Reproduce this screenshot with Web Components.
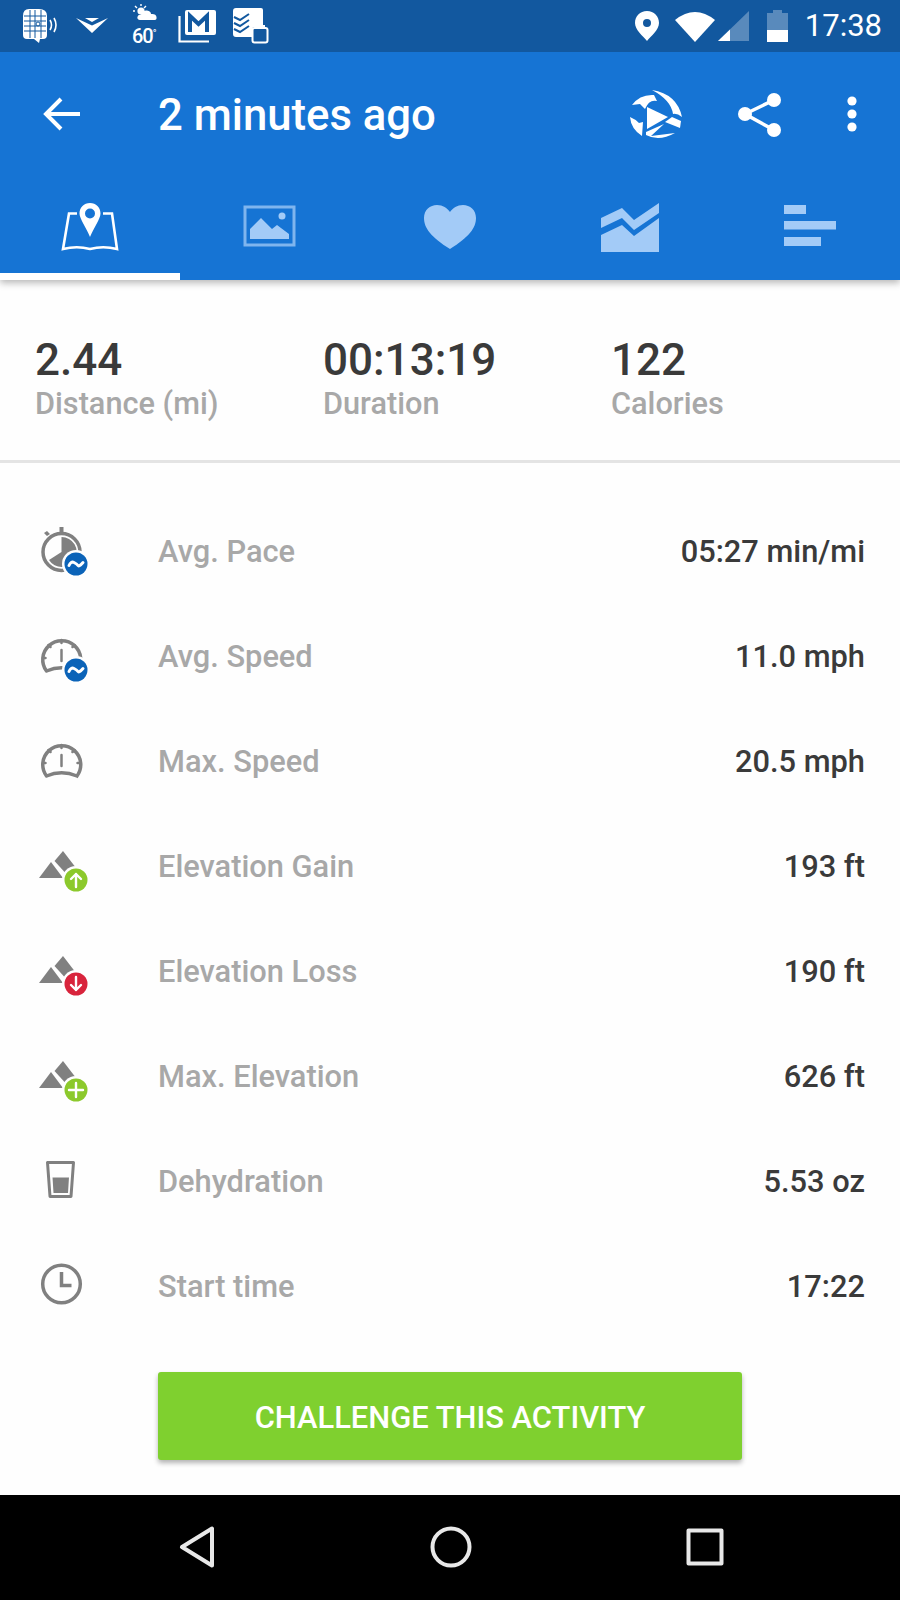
<!DOCTYPE html>
<html lang="en">
<head>
<meta charset="utf-8">
<title>Activity summary</title>
<style>
  html, body { margin: 0; padding: 0; background: #fefefe; }
  body { width: 900px; height: 1600px; display: flex; flex-direction: column; overflow: hidden; font-family: Roboto, "Liberation Sans", sans-serif; }
  activity-details { flex: 1; }
</style>
</head>
<body>
<status-bar></status-bar>
<app-header>2 minutes ago</app-header>
<tab-strip></tab-strip>
<activity-details>
  <summary-stats>
    <stat-item><span slot="label">Distance (mi)</span>2.44</stat-item>
    <stat-item><span slot="label">Duration</span>00:13:19</stat-item>
    <stat-item><span slot="label">Calories</span>122</stat-item>
  </summary-stats>
  <metric-list>
    <metric-row icon="pace"><span slot="label">Avg. Pace</span>05:27 min/mi</metric-row>
    <metric-row icon="avg-speed"><span slot="label">Avg. Speed</span>11.0 mph</metric-row>
    <metric-row icon="max-speed"><span slot="label">Max. Speed</span>20.5 mph</metric-row>
    <metric-row icon="gain"><span slot="label">Elevation Gain</span>193 ft</metric-row>
    <metric-row icon="loss"><span slot="label">Elevation Loss</span>190 ft</metric-row>
    <metric-row icon="max-elevation"><span slot="label">Max. Elevation</span>626 ft</metric-row>
    <metric-row icon="dehydration"><span slot="label">Dehydration</span>5.53 oz</metric-row>
    <metric-row icon="start"><span slot="label">Start time</span>17:22</metric-row>
  </metric-list>
  <challenge-button>CHALLENGE THIS ACTIVITY</challenge-button>
</activity-details>
<nav-bar></nav-bar>

<script>
// Status bar: notification icons on the left, system icons and clock on the right
class StatusBar extends HTMLElement {
  connectedCallback() {
    this.attachShadow({ mode: 'open' }).innerHTML = `
      <style>
        :host { display: flex; align-items: center; height: 52px; background: #12589f; color: #fff; flex: none; }
        svg { display: block; flex: none; }
        .weather { position: relative; width: 30px; height: 44px; margin-left: 23px; }
        .weather svg { margin-left: 2px; }
        .weather span { position: absolute; left: 1px; top: 22px; font: 500 20px/20px Roboto, sans-serif; letter-spacing: -1px; }
        .weather sup { font-size: 10px; position: absolute; top: -2px; }
        .spacer { flex: 1; }
        .time { font: 400 31px/36px Roboto, sans-serif; margin: 0 18px 0 17px; }
      </style>
      <svg style="margin-left:22px" width="36" height="36" viewBox="0 0 36 36" fill="#fff">
        <path d="M7 1h10q8 0 8 7v19q0 4-4 4h-3l-1 4-5-4H5q-4 0-4-4V8q0-7 6-7z"/>
        <path d="M2 8h22M2 13h22M2 18h22M2 23h22M8 2v28M13 2v28M19 2v28" stroke="#12589f" stroke-width="1" fill="none"/>
        <circle cx="16" cy="16" r="2" fill="none" stroke="#12589f" stroke-width="1"/>
        <path d="M28 12q3 5 0 10M32 10q4 7 0 14" fill="none" stroke="#fff" stroke-width="1.6"/>
      </svg>
      <svg style="margin-left:18px" width="32" height="16" viewBox="0 0 32 16" fill="#fff"><path d="M0 0l16 15L32 0 16 7.5z"/><path d="M9 0h14l-7 4z"/></svg>
      <div class="weather">
        <svg width="24" height="18" viewBox="0 0 24 18" fill="#fff">
          <circle cx="8" cy="7" r="3.6"/><path d="M8 0v2M2 2l2 2M0 7h2M13 2l-2 2" stroke="#fff" stroke-width="1.4"/>
          <path d="M7 16q-3-.3-2.6-3T8 10.500Q10 6 14 6.500T18 10q5-.500 5.500 3T21 16z"/>
        </svg>
        <span>60<sup>°</sup></span>
      </div>
      <svg style="margin-left:17px" width="38" height="33" viewBox="0 0 38 33">
        <path d="M1.500 6v25.500H31" fill="none" stroke="#fff" stroke-width="2.200"/>
        <rect x="7" y="0" width="31" height="25" rx="2" fill="#fff"/>
        <path d="M12 22V6l8.500 8L29 6v16" fill="none" stroke="#12589f" stroke-width="4"/>
      </svg>
      <svg style="margin-left:17px" width="36" height="36" viewBox="0 0 36 36">
        <path d="M3 0h25q2 0 2 2v17h-8q-3 0-3 3v7H3q-3 0-3-3V3q0-3 3-3z" fill="#fff"/>
        <path d="M1 9l6 3 9-6M1 15l6 3 9-6M1 21l6 3 9-6" fill="none" stroke="#12589f" stroke-width="2"/>
        <rect x="19.500" y="20" width="15" height="14.500" rx="2" fill="#12589f" stroke="#fff" stroke-width="2"/>
        <path d="M23 19v-2M31 19v-2" stroke="#fff" stroke-width="2"/>
      </svg>
      <div class="spacer"></div>
      <svg width="24" height="30" viewBox="0 0 24 30" fill="#fff">
        <path fill-rule="evenodd" d="M12 0C5 0 0 5 0 12c0 7 8 13 12 18 4-5 12-11 12-18C24 5 19 0 12 0zm0 8a4 4 0 1 1 0 8 4 4 0 0 1 0-8z"/>
      </svg>
      <svg style="margin-left:16px" width="40" height="31" viewBox="0 0 40 31" fill="#fff"><path d="M0 9Q20-7 40 9L20 31z"/></svg>
      <svg style="margin-left:3px" width="31" height="31" viewBox="0 0 31 31"><path d="M31 0v30H0z" fill="#fff" opacity=".3"/><path d="M12 18.500V30H0z" fill="#fff"/></svg>
      <svg style="margin-left:18px" width="21" height="32" viewBox="0 0 21 32">
        <path d="M0 3h6V0h9v3h6v29H0z" fill="#fff" opacity=".3"/><rect y="20" width="21" height="12" fill="#fff"/>
      </svg>
      <span class="time">17:38</span>`;
  }
}

// Title row of the blue app bar
class AppHeader extends HTMLElement {
  connectedCallback() {
    this.attachShadow({ mode: 'open' }).innerHTML = `
      <style>
        :host { display: flex; align-items: center; height: 123px; background: #1674d4; color: #fff; flex: none; padding-top: 1px; box-sizing: border-box; }
        svg { display: block; flex: none; }
        .title { flex: 1; margin-left: 76px; font: 500 43.700px/48px Roboto, sans-serif; position: relative; top: 1px; }
      </style>
      <svg style="margin-left:42px" width="40" height="36" viewBox="0 0 40 36" fill="none" stroke="#fff" stroke-width="4">
        <path d="M38 18H5M19 3L4 18l15 15"/>
      </svg>
      <div class="title"><slot></slot></div>
      <svg width="56" height="56" viewBox="0 0 56 56" fill="#fff">
        <path d="M20 21v22l21-12z"/>
        <path d="M5 19Q13 8 27 9L30 15Q22 13 18 23L13 18z"/>
        <path d="M25 4Q50 8 55 31 50 27 46 28 44 14 25 4z"/>
        <path d="M3 31Q8 33 12 37L16 36 15 50Q4 43 3 31z"/>
        <path d="M19 46L37 38 24 50 48 47Q32 56 19 49z"/>
        <path d="M38 36l7-5 9 4-1 7z"/>
      </svg>
      <svg style="margin-left:55px" width="48" height="48" viewBox="0 0 48 48" fill="#fff" stroke="#fff">
        <path d="M36 10L7 24l29 16" fill="none" stroke-width="3.500"/>
        <circle cx="36" cy="10" r="7" stroke="none"/><circle cx="7" cy="24" r="7" stroke="none"/><circle cx="36" cy="40" r="7" stroke="none"/>
      </svg>
      <svg style="margin-left:58px;margin-right:40px" width="16" height="40" viewBox="0 0 16 40" fill="#fff">
        <circle cx="8" cy="7" r="4.600"/><circle cx="8" cy="20" r="4.600"/><circle cx="8" cy="33" r="4.600"/>
      </svg>`;
  }
}

// Five icon tabs, first one selected
class TabStrip extends HTMLElement {
  connectedCallback() {
    const off = '#a3cbf7';
    this.attachShadow({ mode: 'open' }).innerHTML = `
      <style>
        :host { display: grid; grid-template-columns: repeat(5, 180px); height: 105px; background: #1674d4; flex: none; position: relative; z-index: 1; box-shadow: 0 3px 7px rgba(0,0,0,.28); clip-path: inset(0 0 -20px 0); }
        .tab { display: flex; justify-content: center; padding-top: 26px; box-sizing: border-box; height: 105px; }
        .tab.on { border-bottom: 7px solid #fff; }
        svg { display: block; }
      </style>
      <div class="tab on">
        <svg width="60" height="50" viewBox="0 0 60 50" fill="#fff">
          <path d="M17 12.500H9L3 48q14-3.500 27 0 13-3.500 27 0l-5-35.500h-9" fill="none" stroke="#fff" stroke-width="2.600"/>
          <path fill-rule="evenodd" d="M30 2c-6 0-10.500 4.500-10.500 10.500C19.500 18 27 28 30 36c3-8 10.500-18 10.500-23.500C40.500 6.500 36 2 30 2zm0 5.500a5 5 0 1 1 0 10 5 5 0 0 1 0-10z"/>
        </svg>
      </div>
      <div class="tab">
        <svg width="54" height="42" viewBox="0 0 54 42" style="margin-top:4px">
          <rect x="2" y="2" width="49" height="38" fill="none" stroke="${off}" stroke-width="3" opacity=".75"/>
          <circle cx="39" cy="11" r="3.500" fill="${off}"/>
          <path d="M7 34V24l11-11 11 11 5-4 12 9v5z" fill="${off}"/>
        </svg>
      </div>
      <div class="tab">
        <svg width="54" height="46" viewBox="0 0 54 46" style="margin-top:3px">
          <path d="M27 45C8 33 1 24 1 14 1 6 7 1 14 1c6 0 10 3 13 7 3-4 7-7 13-7 7 0 13 5 13 13 0 10-7 19-26 31z" fill="${off}"/>
        </svg>
      </div>
      <div class="tab">
        <svg width="60" height="52" viewBox="0 0 60 52" fill="${off}">
          <path d="M1 17l21-10 12 12L59 2v10L34 29 22 17 1 27z"/>
          <path d="M1 34l21-10 12 11 25-18v34H1z"/>
        </svg>
      </div>
      <div class="tab">
        <svg width="54" height="42" viewBox="0 0 54 42" fill="${off}" style="margin-top:4px">
          <rect x="1" y="0" width="22" height="9"/><rect x="1" y="16" width="52" height="8.500"/><rect x="1" y="32" width="37" height="9"/>
        </svg>
      </div>`;
  }
}

class ActivityDetails extends HTMLElement {
  connectedCallback() {
    this.attachShadow({ mode: 'open' }).innerHTML = `
      <style>:host { display: flex; flex-direction: column; background: #fefefe; }</style>
      <slot></slot>`;
  }
}

class SummaryStats extends HTMLElement {
  connectedCallback() {
    this.attachShadow({ mode: 'open' }).innerHTML = `
      <style>
        :host { display: grid; grid-template-columns: 288px 288px 1fr; padding: 56px 0 37px 35px; border-bottom: 3px solid #e4e4e4; }
      </style>
      <slot></slot>`;
  }
}

class StatItem extends HTMLElement {
  connectedCallback() {
    this.attachShadow({ mode: 'open' }).innerHTML = `
      <style>
        :host { display: block; }
        .num { font: 500 44px/49px Roboto, sans-serif; color: #3a3a3a; }
        .label { font: 500 30.700px/38px Roboto, sans-serif; color: #a8a8a8; }
      </style>
      <div class="num"><slot></slot></div>
      <div class="label"><slot name="label"></slot></div>`;
  }
}

class MetricList extends HTMLElement {
  connectedCallback() {
    this.attachShadow({ mode: 'open' }).innerHTML = `
      <style>:host { display: block; padding-top: 35px; }</style>
      <slot></slot>`;
  }
}

// Grey glyphs of the metric rows, drawn on a 60x60 box with the badge at the lower right
const GREY = '#808080';
const mountains = `<path d="M9 42l12-16 12 16z" fill="${GREY}"/><path d="M33 15l20 26H39L24.500 25z" fill="${GREY}"/>`;
const gauge = `
  <g fill="none" stroke="${GREY}" stroke-width="3.500" stroke-linecap="round">
    <path d="M16.500 45A19 19 0 1 1 47 45Q31.500 38.500 16.500 45"/>
    <path stroke-width="2.500" d="M31.500 14v3M18.500 19l2 2M44.500 19l-2 2M13 32h2.500M50 32h-2.500"/>
    <path stroke-width="2.500" d="M31.500 24v11"/>
  </g>`;
const badge = (color, glyph, cy = 44) => `
  <circle cx="46" cy="${cy}" r="14" fill="#fefefe"/>
  <circle cx="46" cy="${cy}" r="11.500" fill="${color}"/>
  <g transform="translate(46 ${cy})" fill="none" stroke="#fff" stroke-width="2.400" stroke-linecap="round" stroke-linejoin="round">${glyph}</g>`;
const tilde = '<path stroke-width="3" d="M-7 1.500Q-5-3-2-1.500T2 1.500 7-1.500"/>';

const METRIC_ICONS = {
  pace: `
    <circle cx="31.500" cy="31" r="18.500" fill="none" stroke="${GREY}" stroke-width="3.500"/>
    <path d="M29.500 6h4v5h-4zM14 12l3-2 3 3-3 2z" fill="${GREY}"/>
    <path d="M31.500 16A15 15 0 1 1 19 39l12.500-8z" fill="${GREY}"/>
    ${badge('#0b63b8', tilde, 43)}`,
  'avg-speed': gauge + badge('#0b63b8', tilde, 44),
  'max-speed': gauge,
  gain: mountains + badge('#8cc92c', '<path d="M0 7V-6M-5-1L0-6 5-1"/>'),
  loss: mountains + badge('#d8243c', '<path d="M0-7V6M-5 1L0 6 5 1"/>', 43),
  'max-elevation': mountains + badge('#8cc92c', '<path d="M0-7V7M-7 0H7"/>'),
  dehydration: `
    <path d="M17.500 11.500h26L41 45.500H20z" fill="none" stroke="${GREY}" stroke-width="3" stroke-linejoin="round"/>
    <path d="M22.500 26.500h16.500L38 42H23.500z" fill="${GREY}"/>`,
  start: `
    <circle cx="31.500" cy="28" r="18.800" fill="none" stroke="${GREY}" stroke-width="3.500"/>
    <path d="M31.500 16v13.500h10" fill="none" stroke="${GREY}" stroke-width="3.500"/>`
};

class MetricRow extends HTMLElement {
  connectedCallback() {
    const icon = METRIC_ICONS[this.getAttribute('icon')] || '';
    this.attachShadow({ mode: 'open' }).innerHTML = `
      <style>
        :host { display: flex; align-items: center; height: 105px; padding: 0 35px 0 30px; }
        svg { display: block; flex: none; }
        .label { margin-left: 68px; flex: 1; padding-top: 2px; font: 500 30.800px/38px Roboto, sans-serif; color: #a8a8a8; }
        .value { padding-top: 2px; font: 500 30.800px/38px Roboto, sans-serif; color: #3a3a3a; }
      </style>
      <svg width="60" height="60" viewBox="0 0 60 60">${icon}</svg>
      <div class="label"><slot name="label"></slot></div>
      <div class="value"><slot></slot></div>`;
  }
}

class ChallengeButton extends HTMLElement {
  connectedCallback() {
    this.attachShadow({ mode: 'open' }).innerHTML = `
      <style>
        :host { display: block; margin: 34px 0 0 158px; width: 584px; }
        button { display: block; width: 100%; height: 88px; border: 0; border-radius: 3px; padding: 5px 0 0; background: #7fd02f; color: #fff; font: 500 30.900px/1 Roboto, sans-serif; box-shadow: 0 3px 5px rgba(0,0,0,.3); }
      </style>
      <button type="button"><slot></slot></button>`;
  }
}

class NavBar extends HTMLElement {
  connectedCallback() {
    this.attachShadow({ mode: 'open' }).innerHTML = `
      <style>
        :host { display: flex; align-items: center; height: 105px; background: #000; flex: none; box-sizing: border-box; padding-bottom: 1px; }
        svg { display: block; flex: none; }
      </style>
      <svg style="margin-left:179px" width="36" height="42" viewBox="0 0 36 42" fill="none" stroke="#e8e8e8" stroke-width="4" stroke-linejoin="round">
        <path d="M33 2.500V39.500L3 21z"/>
      </svg>
      <svg style="margin-left:215px" width="42" height="42" viewBox="0 0 42 42" fill="none" stroke="#e8e8e8" stroke-width="4"><circle cx="21" cy="21" r="18.500"/></svg>
      <svg style="margin-left:214px" width="38" height="38" viewBox="0 0 38 38" fill="none" stroke="#e8e8e8" stroke-width="4" stroke-linejoin="round"><rect x="2.500" y="2.500" width="33" height="33"/></svg>`;
  }
}

customElements.define('status-bar', StatusBar);
customElements.define('app-header', AppHeader);
customElements.define('tab-strip', TabStrip);
customElements.define('activity-details', ActivityDetails);
customElements.define('summary-stats', SummaryStats);
customElements.define('stat-item', StatItem);
customElements.define('metric-list', MetricList);
customElements.define('metric-row', MetricRow);
customElements.define('challenge-button', ChallengeButton);
customElements.define('nav-bar', NavBar);
</script>
</body>
</html>
